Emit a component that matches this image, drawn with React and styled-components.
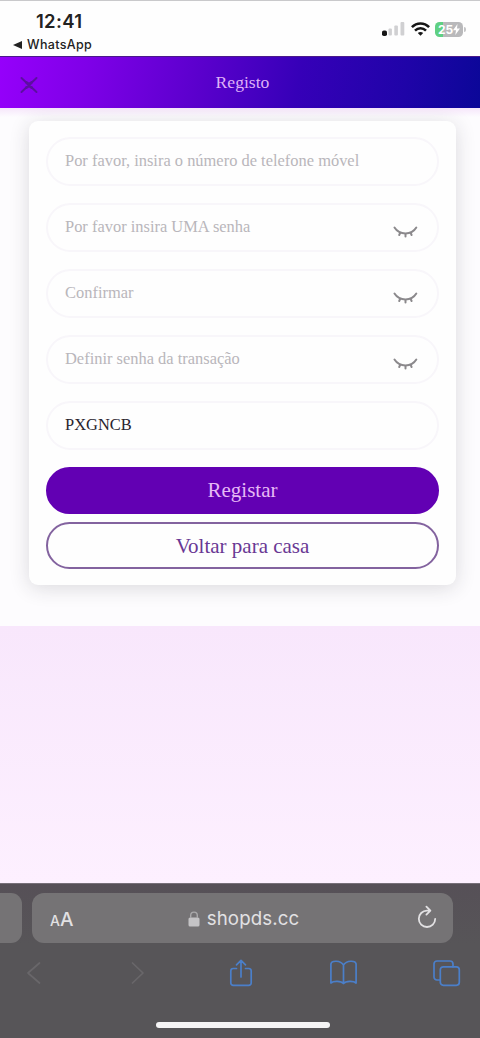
import React from 'react'
import styled, { createGlobalStyle } from 'styled-components'

const GlobalStyle = createGlobalStyle`
  * {
    box-sizing: border-box;
  }
  body {
    margin: 0;
    font-family: "Liberation Serif", serif;
  }
  button, input {
    font-family: inherit;
  }
`;

const Screen = styled.div`
  display: flex;
  flex-direction: column;
  width: 480px;
  height: 1038px;
  overflow: hidden;
  background: linear-gradient(#f8e7fc 626px, #fdf0ff 883px);
`;

const StatusBar = styled.div`
  display: flex;
  justify-content: space-between;
  height: 56px;
  flex-shrink: 0;
  padding: 11px 13px 0 13px;
  border-top: 1px solid #c9c9cb;
  background: #fefefe;
  color: #222;
  font-family: Inter, sans-serif;
`;

const Clock = styled.div`
  padding-left: 23px;
  font-size: 18.5px;
  font-weight: 600;
  line-height: 19px;
  letter-spacing: 0.3px;
`;

const BackTo = styled.div`
  display: flex;
  align-items: center;
  gap: 5px;
  margin-top: 5px;
  font-size: 12.5px;
  font-weight: 500;
  line-height: 18px;
  letter-spacing: 0.35px;
`;

const StatusIcons = styled.div`
  display: flex;
  align-items: center;
  gap: 5px;
  height: 20px;
  margin-top: 7px;
`;

const Battery = styled.div`
  display: flex;
  align-items: center;
  justify-content: center;
  position: relative;
  width: 28px;
  height: 15px;
  margin-right: 4px;
  border-radius: 4.5px;
  background: linear-gradient(90deg, #5fd083 8px, #b9b9bb 8px);
  color: #fff;
  font-size: 12px;
  font-weight: 700;

  &::after {
    content: '';
    position: absolute;
    right: -3px;
    top: 5px;
    width: 2px;
    height: 5px;
    border-radius: 0 2px 2px 0;
    background: #c4c4c6;
  }
`;

const Header = styled.header`
  display: grid;
  grid-template-columns: 40px 1fr 40px;
  align-items: center;
  height: 52px;
  flex-shrink: 0;
  padding: 0 9px;
  border-top: 1px solid #4a1a8a;
  background: linear-gradient(100deg, #9600fb 0%, #7f00e8 18%, #5a00cc 42%, #3600b8 62%, #1f04a8 84%, #0b0798 100%);
  color: #dfb0f8;
`;

const CloseButton = styled.button`
  display: flex;
  justify-content: center;
  padding: 4px 0 0;
  border: none;
  background: none;
  color: #5c0fa0;
`;

const HeaderTitle = styled.h1`
  margin: 0 0 1px;
  padding-left: 5px;
  font-size: 17.6px;
  font-weight: 400;
  text-align: center;
`;

const FormSection = styled.main`
  flex-shrink: 0;
  height: 518px;
  padding: 13px 24px 0 29px;
  background: linear-gradient(#f6e6fb 0, #fdfcfe 9px);
`;

const Card = styled.form`
  display: flex;
  flex-direction: column;
  height: 464px;
  padding: 16px 17px 17px;
  border-radius: 9px;
  background: #fefefe;
  box-shadow: 0 3px 20px rgba(40, 40, 50, 0.16);
`;

const Field = styled.label`
  display: flex;
  flex-shrink: 0;
  align-items: center;
  height: 49px;
  margin-bottom: 17px;
  padding: 0 19px 0 17px;
  border: 2px solid #f8f6fa;
  border-radius: 25px;
`;

const Input = styled.input`
  flex: 1;
  min-width: 0;
  padding: 0 0 1px;
  border: none;
  outline: none;
  background: transparent;
  color: #29242e;
  font-size: 16.45px;

  &::placeholder {
    color: #b9b6bb;
    opacity: 1;
  }
`;

const Button = styled.button`
  height: 47px;
  flex-shrink: 0;
  margin-bottom: 8px;
  padding: ${({ $outlined }) => ($outlined ? '2px 0 0' : '0')};
  border: 2px solid ${({ $outlined }) => ($outlined ? '#83639f' : '#6200b3')};
  border-radius: 24px;
  background: ${({ $outlined }) => ($outlined ? '#fefefe' : '#6200b3')};
  color: ${({ $outlined }) => ($outlined ? '#693894' : '#e6b8f5')};
  font-size: 21px;
`;

const Browser = styled.footer`
  flex-shrink: 0;
  height: 155px;
  margin-top: auto;
  border-top: 1px solid #777079;
  background: linear-gradient(#565057, #575558 60px);
  color: #e2e1e3;
  font-family: Inter, sans-serif;
`;

const Tabs = styled.div`
  display: flex;
  gap: 10px;
  height: 50px;
  margin-top: 9px;
`;

const PreviousTab = styled.div`
  width: 22px;
  border-radius: 0 11px 11px 0;
  background: #757375;
`;

const AddressBar = styled.div`
  display: grid;
  grid-template-columns: 30px 1fr 24px;
  align-items: center;
  width: 421px;
  padding: 0 13px 0 18px;
  border-radius: 12px;
  background: #757375;
`;

const TextSize = styled.span`
  display: flex;
  align-items: baseline;
  margin-top: 4px;
  font-size: 19px;
  font-weight: 500;
  line-height: 20px;

  small {
    font-size: 14px;
  }
`;

const Address = styled.span`
  display: flex;
  align-items: center;
  justify-content: center;
  gap: 7px;
  margin: 2px 9px 0 0;
  font-size: 18.7px;
  line-height: 24px;
  letter-spacing: 0.1px;
`;

const Toolbar = styled.nav`
  display: flex;
  justify-content: space-between;
  align-items: center;
  height: 32px;
  margin-top: 14px;
  padding: 0 19px 0 20px;
  color: #4b7fc9;
`;

const HomeIndicator = styled.div`
  width: 174px;
  height: 6px;
  margin: 33px 150px 0 156px;
  border-radius: 3px;
  background: #f5f4f5;
`;

const EyeButton = styled.button`
  display: flex;
  margin-top: 8px;
  padding: 0;
  border: none;
  background: none;
`;

const ClosedEye = () => (
  <svg width="25" height="14" viewBox="0 0 25 14" fill="none" stroke="#8b898c" strokeWidth="2" strokeLinecap="round">
    <path d="M1.5 2.5C6.5 10.4 18.5 10.4 23.3 2.5" />
    <path d="M7.1 8 6.2 10M12.5 8.9v2.5M17.7 8l.9 2" strokeWidth="2" />
  </svg>
);

const Stroke = ({ width = 28, color = 'currentColor', weight = 1.7, children }) => (
  <svg width={width} height="28" viewBox={`0 0 ${width} 28`} fill="none" stroke={color} strokeWidth={weight} strokeLinecap="round" strokeLinejoin="round">
    {children}
  </svg>
);

const fields = [
  { placeholder: 'Por favor, insira o número de telefone móvel' },
  { placeholder: 'Por favor insira UMA senha', secret: true },
  { placeholder: 'Confirmar', secret: true },
  { placeholder: 'Definir senha da transação', secret: true },
  { value: 'PXGNCB' },
];

const App = () => {
  return (
    <Screen>
      <GlobalStyle />
      <StatusBar>
        <div>
          <Clock>12:41</Clock>
          <BackTo>
            <svg width="9" height="8" viewBox="0 0 9 8" fill="currentColor"><path d="M0 4 9 0v8z" /></svg>
            WhatsApp
          </BackTo>
        </div>
        <StatusIcons>
          <svg width="24" height="14" viewBox="0 0 24 14" fill="#d0d0d2">
            <rect x="0" y="8.5" width="5" height="5.5" rx="1.8" fill="#161616" />
            <rect x="6.5" y="6.5" width="3.4" height="7" rx="1" />
            <rect x="12.3" y="3.5" width="3.6" height="10" rx="1" />
            <rect x="18.5" y="0" width="3.8" height="13.5" rx="1" />
          </svg>
          <svg width="19" height="14" viewBox="0 0 19 14" fill="none" stroke="#161616" strokeWidth="2.5">
            <path d="M.9 5.2c4.9-5 12.3-5 17.2 0M4 8.6c3.1-3.2 7.9-3.2 11 0" />
            <path d="M9.5 13.8 6.8 11c1.5-1.5 3.9-1.5 5.4 0z" fill="#161616" stroke="none" />
          </svg>
          <Battery>
            25
            <svg width="7" height="11" viewBox="0 0 7 11" fill="currentColor"><path d="M4.5 0 0 6.2h3L2.3 11 7 4.5H4z" /></svg>
          </Battery>
        </StatusIcons>
      </StatusBar>

      <Header>
        <CloseButton type="button" aria-label="Fechar">
          <svg width="20" height="20" viewBox="0 0 20 20" fill="none" stroke="currentColor" strokeWidth="2" strokeLinecap="round">
            <path d="M2.5 3l4.5 4.2q3 2.8 6 0L17.5 3M2.5 17l4.5-4.2q3-2.8 6 0l4.5 4.2" />
            <path d="M7.5 7.5l5 5M12.5 7.5l-5 5" strokeWidth="2.8" />
          </svg>
        </CloseButton>
        <HeaderTitle>Registo</HeaderTitle>
      </Header>

      <FormSection>
        <Card>
          {fields.map((field, i) => (
            <Field key={i}>
              <Input placeholder={field.placeholder} defaultValue={field.value} />
              {field.secret && (
                <EyeButton type="button" aria-label="Mostrar">
                  <ClosedEye />
                </EyeButton>
              )}
            </Field>
          ))}
          <Button type="button">Registar</Button>
          <Button type="button" $outlined>Voltar para casa</Button>
        </Card>
      </FormSection>

      <Browser>
        <Tabs>
          <PreviousTab />
          <AddressBar>
            <TextSize><small>A</small>A</TextSize>
            <Address>
              <svg width="12" height="16" viewBox="0 0 12 16" fill="#c4c3c5">
                <rect x="0.5" y="6.5" width="11" height="9" rx="1.6" />
                <path d="M2.7 7V4.4a3.3 3.3 0 0 1 6.6 0V7" fill="none" stroke="#aaa9ab" strokeWidth="1.4" />
              </svg>
              shopds.cc
            </Address>
            <Stroke width={22} weight={1.8}>
              <path d="M13.2 6.6H11a8.2 8.2 0 1 0 8.2 8.2M10.4 2.6l4 4-4 4" />
            </Stroke>
          </AddressBar>
        </Tabs>
        <Toolbar>
          <Stroke color="#69676a"><path d="M19.5 4 8 14l11.5 10" /></Stroke>
          <Stroke color="#69676a"><path d="M9.5 4 20 14 9.5 24" /></Stroke>
          <Stroke>
            <path d="M9.5 9.5H6.2a2.4 2.4 0 0 0-2.4 2.4v12a2.4 2.4 0 0 0 2.4 2.4h15.6a2.4 2.4 0 0 0 2.4-2.4v-12a2.4 2.4 0 0 0-2.4-2.4h-3.3M14 18V1.5M9.5 5.8 14 1.3l4.5 4.5" />
          </Stroke>
          <Stroke>
            <path d="M13.5 6C10.5 1.2 1.5 1.2.9 5v19c2.5-2.2 10.1-2.2 12.6.5 2.5-2.7 10.1-2.7 12.6-.5V5c-.6-3.8-9.6-3.8-12.6 1zM13.5 6v18.5" />
          </Stroke>
          <Stroke>
            <rect x="7.3" y="7.8" width="19" height="18.5" rx="3" />
            <path d="M7.3 21H4a3 3 0 0 1-3-3V5a3 3 0 0 1 3-3h13a3 3 0 0 1 3 3v2.8" />
          </Stroke>
        </Toolbar>
        <HomeIndicator />
      </Browser>
    </Screen>
  )
}

export default App
